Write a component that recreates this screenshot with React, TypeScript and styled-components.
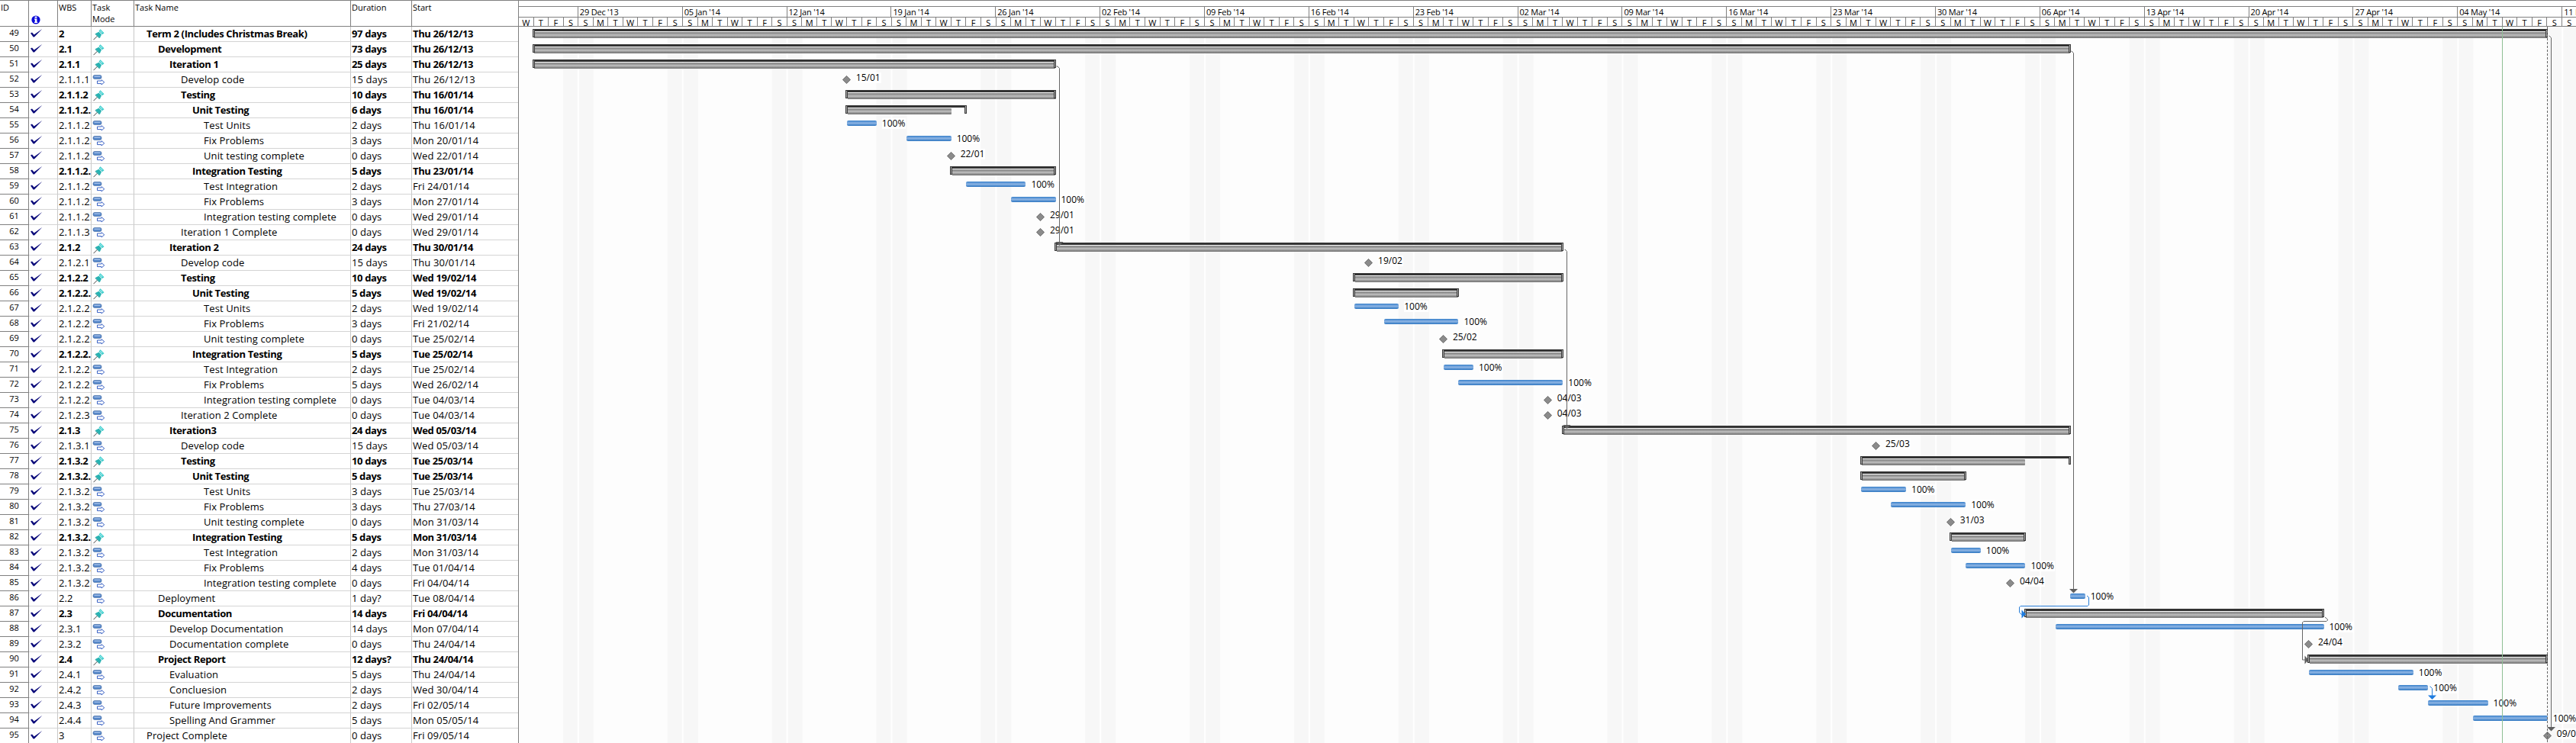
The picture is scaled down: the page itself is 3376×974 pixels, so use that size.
import styled, { createGlobalStyle } from "styled-components";

const GlobalStyle = createGlobalStyle`
    html, body {
        margin: 0;
        height: 974px;
        overflow: hidden;
        background: #fff;
    }
    body {
        font-family: "Open Sans", "Liberation Sans", sans-serif;
        font-size: 13px;
        color: #000;
    }
`;

const DAY = 19.553;
const WEEK = DAY * 7;
const X = (d: number) => -0.4 + DAY * d;

const Sheet = styled.div`
    display: flex;
    width: 3376px;
    height: 974px;
    overflow: hidden;
`;

const Table = styled.div`
    flex: 0 0 680px;
    box-sizing: border-box;
    border-right: 1px solid #808080;
`;

const columns = "38px 38px 44px 56px 284px 80px 1fr";

const TableHead = styled.div`
    display: grid;
    grid-template-columns: ${columns};
    height: 35px;
    box-sizing: border-box;
    border-top: 1px solid #808080;
    border-bottom: 1px solid #808080;
    font-size: 11px;
`;

const HeadCell = styled.div`
    box-sizing: border-box;
    padding: 1px 0 0 1px;
    line-height: 15px;
    border-right: 1px solid #808080;
    position: relative;
    &:last-child {
        border-right: 0;
    }
`;

const InfoBadge = styled.svg`
    position: absolute;
    left: 2px;
    top: 18px;
`;

const Row = styled.div<{ $bold?: boolean }>`
    display: grid;
    grid-template-columns: ${columns};
    height: 20px;
    box-sizing: border-box;
    font-weight: ${props => (props.$bold ? 700 : 400)};
    letter-spacing: ${props => (props.$bold ? -0.35 : 0.1)}px;
`;

const Cell = styled.div`
    box-sizing: border-box;
    height: 20px;
    padding-left: 1px;
    line-height: 19px;
    white-space: nowrap;
    overflow: hidden;
    border-right: 1px solid #c8c8c8;
    border-bottom: 1px solid #d4d4d4;
    &:last-child {
        border-right: 0;
    }
`;

const IdCell = styled(Cell)`
    padding: 0;
    text-align: center;
    font-size: 11px;
    line-height: 15px;
    font-weight: 400;
    letter-spacing: 0;
    border-right: 1px solid #808080;
    border-bottom: 1px solid #808080;
`;

const MarkCell = styled(Cell)`
    padding: 0;
`;

const NameCell = styled(Cell)<{ $level: number }>`
    padding-left: ${props => 16 + props.$level * 15}px;
`;

const Chart = styled.div`
    flex: 1;
    min-width: 0;
    overflow: hidden;
`;

const Timescale = styled.div`
    height: 35px;
    box-sizing: border-box;
    padding-top: 7px;
    border-top: 1px solid #808080;
    border-bottom: 1px solid #808080;
    font-size: 11px;
`;

const ScaleTier = styled.div`
    display: flex;
    height: 13px;
    border-top: 1px solid #808080;
    white-space: nowrap;
`;

const WeekCell = styled.div<{ $lead?: boolean }>`
    flex: 0 0 ${props => (props.$lead ? DAY * 4 - 0.4 : WEEK)}px;
    box-sizing: border-box;
    padding-left: 2px;
    border-right: 1px solid #808080;
    line-height: 13px;
    letter-spacing: -0.2px;
`;

const DayCell = styled.div`
    flex: 0 0 ${DAY}px;
    box-sizing: border-box;
    text-align: center;
    border-right: 1px solid #808080;
    line-height: 13px;
`;

const ChartBody = styled.div`
    position: relative;
    height: 940px;
    background-color: #fdfdfd;
    background-image: linear-gradient(
        to right,
        transparent 58.3px,
        #f7f7f7 58.3px,
        #f7f7f7 77.4px,
        #ffffff 77.4px,
        #ffffff 78.6px,
        #f7f7f7 78.6px,
        #f7f7f7 97.4px,
        transparent 97.4px
    );
    background-size: ${WEEK}px 100%;
    background-repeat: repeat-x;
`;

const Track = styled.div`
    display: flex;
    align-items: flex-start;
    height: 20px;
    white-space: nowrap;
`;

const Summary = styled.div`
    position: relative;
    flex: none;
    height: 12px;
    margin-top: 3px;
    border-top: 3px solid #333;
    box-sizing: border-box;
    &::before,
    &::after {
        content: "";
        position: absolute;
        top: -3px;
        width: 3px;
        height: 11px;
        box-sizing: border-box;
        border: 1px solid #3a3a3a;
        background: #a8a8a8;
    }
    &::before {
        left: 0;
    }
    &::after {
        right: 0;
    }
`;

const SummaryFill = styled.div`
    height: 8px;
    margin: 1px 0 0 2.5px;
    border-radius: 0 1px 1px 0;
    background: linear-gradient(to bottom, #8c8c8c 0%, #969696 28%, #c4c4c4 50%, #949494 72%, #747474 100%);
`;

const TaskBar = styled.div`
    flex: none;
    height: 7px;
    margin-top: 3px;
    border-radius: 2px;
    background: linear-gradient(to bottom, #2f7bc8 0%, #5f98d6 20%, #8ab2e2 50%, #5a94d2 75%, #2c74c0 100%);
`;

const Diamond = styled.svg`
    flex: none;
    margin-top: 3.5px;
`;

const BarLabel = styled.span`
    margin-left: 7px;
    padding-right: 1px;
    font-size: 12px;
    line-height: 14px;
    background: #fff;
`;

const Links = styled.svg`
    position: absolute;
    top: 0;
    left: 0;
    pointer-events: none;
`;

type Bar =
    | { k: "s"; from: number; to: number; fill?: number }
    | { k: "t"; from: number; to: number }
    | { k: "m"; at: number; label: string };

type Task = [number, string, "pin" | "auto", string, number, string, string, Bar];

const s = (from: number, to: number, fill?: number): Bar => ({ k: "s", from, to, fill });
const t = (from: number, to: number): Bar => ({ k: "t", from, to });
const m = (at: number, label: string): Bar => ({ k: "m", at, label });

const tasks: Task[] = [
    [49, "2", "pin", "Term 2 (Includes Christmas Break)", 0, "97 days", "Thu 26/12/13", s(1, 136)],
    [50, "2.1", "pin", "Development", 1, "73 days", "Thu 26/12/13", s(1, 104)],
    [51, "2.1.1", "pin", "Iteration 1", 2, "25 days", "Thu 26/12/13", s(1, 36)],
    [52, "2.1.1.1", "auto", "Develop code", 3, "15 days", "Thu 26/12/13", m(22, "15/01")],
    [53, "2.1.1.2", "pin", "Testing", 3, "10 days", "Thu 16/01/14", s(22, 36)],
    [54, "2.1.1.2.", "pin", "Unit Testing", 4, "6 days", "Thu 16/01/14", s(22, 30, 29)],
    [55, "2.1.1.2.", "auto", "Test Units", 5, "2 days", "Thu 16/01/14", t(22, 24)],
    [56, "2.1.1.2.", "auto", "Fix Problems", 5, "3 days", "Mon 20/01/14", t(26, 29)],
    [57, "2.1.1.2.", "auto", "Unit testing complete", 5, "0 days", "Wed 22/01/14", m(29, "22/01")],
    [58, "2.1.1.2.", "pin", "Integration Testing", 4, "5 days", "Thu 23/01/14", s(29, 36)],
    [59, "2.1.1.2.", "auto", "Test Integration", 5, "2 days", "Fri 24/01/14", t(30, 34)],
    [60, "2.1.1.2.", "auto", "Fix Problems", 5, "3 days", "Mon 27/01/14", t(33, 36)],
    [61, "2.1.1.2.", "auto", "Integration testing complete", 5, "0 days", "Wed 29/01/14", m(35, "29/01")],
    [62, "2.1.1.3", "auto", "Iteration 1 Complete", 3, "0 days", "Wed 29/01/14", m(35, "29/01")],
    [63, "2.1.2", "pin", "Iteration 2", 2, "24 days", "Thu 30/01/14", s(36, 70)],
    [64, "2.1.2.1", "auto", "Develop code", 3, "15 days", "Thu 30/01/14", m(57, "19/02")],
    [65, "2.1.2.2", "pin", "Testing", 3, "10 days", "Wed 19/02/14", s(56, 70)],
    [66, "2.1.2.2.", "pin", "Unit Testing", 4, "5 days", "Wed 19/02/14", s(56, 63)],
    [67, "2.1.2.2.", "auto", "Test Units", 5, "2 days", "Wed 19/02/14", t(56, 59)],
    [68, "2.1.2.2.", "auto", "Fix Problems", 5, "3 days", "Fri 21/02/14", t(58, 63)],
    [69, "2.1.2.2.", "auto", "Unit testing complete", 5, "0 days", "Tue 25/02/14", m(62, "25/02")],
    [70, "2.1.2.2.", "pin", "Integration Testing", 4, "5 days", "Tue 25/02/14", s(62, 70)],
    [71, "2.1.2.2.", "auto", "Test Integration", 5, "2 days", "Tue 25/02/14", t(62, 64)],
    [72, "2.1.2.2.", "auto", "Fix Problems", 5, "5 days", "Wed 26/02/14", t(63, 70)],
    [73, "2.1.2.2.", "auto", "Integration testing complete", 5, "0 days", "Tue 04/03/14", m(69, "04/03")],
    [74, "2.1.2.3", "auto", "Iteration 2 Complete", 3, "0 days", "Tue 04/03/14", m(69, "04/03")],
    [75, "2.1.3", "pin", "Iteration3", 2, "24 days", "Wed 05/03/14", s(70, 104)],
    [76, "2.1.3.1", "auto", "Develop code", 3, "15 days", "Wed 05/03/14", m(91, "25/03")],
    [77, "2.1.3.2", "pin", "Testing", 3, "10 days", "Tue 25/03/14", s(90, 104, 101)],
    [78, "2.1.3.2.", "pin", "Unit Testing", 4, "5 days", "Tue 25/03/14", s(90, 97)],
    [79, "2.1.3.2.", "auto", "Test Units", 5, "3 days", "Tue 25/03/14", t(90, 93)],
    [80, "2.1.3.2.", "auto", "Fix Problems", 5, "3 days", "Thu 27/03/14", t(92, 97)],
    [81, "2.1.3.2.", "auto", "Unit testing complete", 5, "0 days", "Mon 31/03/14", m(96, "31/03")],
    [82, "2.1.3.2.", "pin", "Integration Testing", 4, "5 days", "Mon 31/03/14", s(96, 101)],
    [83, "2.1.3.2.", "auto", "Test Integration", 5, "2 days", "Mon 31/03/14", t(96, 98)],
    [84, "2.1.3.2.", "auto", "Fix Problems", 5, "4 days", "Tue 01/04/14", t(97, 101)],
    [85, "2.1.3.2.", "auto", "Integration testing complete", 5, "0 days", "Fri 04/04/14", m(100, "04/04")],
    [86, "2.2", "auto", "Deployment", 1, "1 day?", "Tue 08/04/14", t(104, 105)],
    [87, "2.3", "pin", "Documentation", 1, "14 days", "Fri 04/04/14", s(101, 121)],
    [88, "2.3.1", "auto", "Develop Documentation", 2, "14 days", "Mon 07/04/14", t(103, 121)],
    [89, "2.3.2", "auto", "Documentation complete", 2, "0 days", "Thu 24/04/14", m(120, "24/04")],
    [90, "2.4", "pin", "Project Report", 1, "12 days?", "Thu 24/04/14", s(120, 136)],
    [91, "2.4.1", "auto", "Evaluation", 2, "5 days", "Thu 24/04/14", t(120, 127)],
    [92, "2.4.2", "auto", "Concluesion", 2, "2 days", "Wed 30/04/14", t(126, 128)],
    [93, "2.4.3", "auto", "Future Improvements", 2, "2 days", "Fri 02/05/14", t(128, 132)],
    [94, "2.4.4", "auto", "Spelling And Grammer", 2, "5 days", "Mon 05/05/14", t(131, 136)],
    [95, "3", "auto", "Project Complete", 0, "0 days", "Fri 09/05/14", m(136, "09/05")],
];

const weeks = [
    "29 Dec '13", "05 Jan '14", "12 Jan '14", "19 Jan '14", "26 Jan '14", "02 Feb '14", "09 Feb '14",
    "16 Feb '14", "23 Feb '14", "02 Mar '14", "09 Mar '14", "16 Mar '14", "23 Mar '14", "30 Mar '14",
    "06 Apr '14", "13 Apr '14", "20 Apr '14", "27 Apr '14", "04 May '14", "11 May '14",
];

const dayLetters = ["W", "T", "F", "S", "S", "M", "T"];

function CheckMark() {
    return <svg width="20" height="19" viewBox="0 0 20 19">
        <path d="M2 8.5 L4 7.6 L6.6 10.6 L17.2 3 L7 13.6 L5.6 13.6 Z" fill="#0a0a7a" />
    </svg>;
}

function PinIcon() {
    return <svg width="18" height="19" viewBox="-2 -2.7 18 19">
        <path d="M5.5 9.5 L0.5 14.5" stroke="#444" strokeWidth="1" />
        <path d="M3 6.2 L9 12 L11 7.5 L7.5 4 Z" fill="#27b3b3" />
        <path d="M7.5 3 L9.5 0.5 L14.5 5.5 L12 7.5 Z" fill="#3cc9c9" />
        <path d="M9.2 2.5 L12.2 5.5" stroke="#9af0f0" strokeWidth="1.2" />
        <path d="M3 6.2 L9 12 L8 12.4 L2.6 7 Z" fill="#118f8f" />
    </svg>;
}

function AutoIcon() {
    return <svg width="18" height="19" viewBox="0 0 18 19">
        <rect x="2" y="3.5" width="11" height="5" rx="2" fill="#5587c9" stroke="#41689f" strokeWidth="0.6" />
        <rect x="3.5" y="4.6" width="8" height="1.4" fill="#a4bfe8" />
        <path d="M7.5 11 H13 V9.7 L16.8 12.8 L13 16 V14.6 H7.5 Z" fill="#fff" stroke="#3a62c4" strokeWidth="1" />
    </svg>;
}

function BarCell({ bar }: { bar: Bar }) {
    if (bar.k === "s") {
        const left = X(bar.from) - 1.5;
        const right = X(bar.to) + 0.5;
        const fillEnd = X(bar.fill ?? bar.to);
        return <Track style={{ paddingLeft: left }}>
            <Summary style={{ width: right - left }}>
                <SummaryFill style={{ width: fillEnd - left - 2.5 }} />
            </Summary>
        </Track>;
    }
    if (bar.k === "t") {
        return <Track style={{ paddingLeft: X(bar.from) }}>
            <TaskBar style={{ width: X(bar.to) - X(bar.from) }} />
            <BarLabel>100%</BarLabel>
        </Track>;
    }
    return <Track style={{ paddingLeft: X(bar.at) - 6 }}>
        <Diamond width="11" height="11" viewBox="0 0 11 11">
            <path d="M5.5 0.4 L10.6 5.5 L5.5 10.6 L0.4 5.5 Z" fill="#8b8b8b" stroke="#5a5a5a" strokeWidth="0.8" />
        </Diamond>
        <BarLabel>{bar.label}</BarLabel>
    </Track>;
}

function App() {
    const days = Array.from({ length: 138 }, (_, i) => dayLetters[i % 7]);
    return <Sheet>
        <GlobalStyle />
        <Table>
            <TableHead>
                <HeadCell>ID</HeadCell>
                <HeadCell>
                    <InfoBadge width="14" height="14" viewBox="0 0 14 14">
                        <circle cx="7" cy="7" r="5.6" fill="#0a0ad8" />
                        <rect x="5.6" y="2.6" width="2.8" height="2" fill="#fff" />
                        <path d="M5 5.6 H8.4 V9.8 H9.2 V11 H5 V9.8 H5.8 V6.8 H5 Z" fill="#fff" />
                    </InfoBadge>
                </HeadCell>
                <HeadCell>WBS</HeadCell>
                <HeadCell>Task<br />Mode</HeadCell>
                <HeadCell>Task Name</HeadCell>
                <HeadCell>Duration</HeadCell>
                <HeadCell>Start</HeadCell>
            </TableHead>
            {tasks.map(([id, wbs, mode, name, level, duration, start, bar]) =>
                <Row key={id} $bold={bar.k === "s"}>
                    <IdCell>{id}</IdCell>
                    <MarkCell><CheckMark /></MarkCell>
                    <Cell>{wbs}</Cell>
                    <MarkCell>{mode === "pin" ? <PinIcon /> : <AutoIcon />}</MarkCell>
                    <NameCell $level={level}>{name}</NameCell>
                    <Cell>{duration}</Cell>
                    <Cell>{start}</Cell>
                </Row>)}
        </Table>
        <Chart>
            <Timescale>
                <ScaleTier>
                    <WeekCell $lead />
                    {weeks.map(week => <WeekCell key={week}>{week}</WeekCell>)}
                </ScaleTier>
                <ScaleTier>
                    {days.map((day, i) => <DayCell key={i}>{day}</DayCell>)}
                </ScaleTier>
            </Timescale>
            <ChartBody>
                {tasks.map(([id, , , , , , , bar]) => <BarCell key={id} bar={bar} />)}
                {/* page coordinates: the viewBox starts where the chart body starts */}
                <Links width="2696" height="940" viewBox="680 35 2696 940">
                    <path d="M3279.5 35 V975" stroke="#8fbf95" fill="none" />
                    <path d="M3338.5 35 V975" stroke="#666" strokeDasharray="3 2" fill="none" />
                    <g stroke="#666" fill="none">
                        <path d="M1384.5 87 H1386 L1388.5 89.5 V318" />
                        <path d="M2050.5 327 H2051 L2053.5 329.5 V558" />
                        <path d="M2714.5 67 H2715 L2717.5 69.5 V773" />
                        <path d="M3340.5 47 H3341 L3343.5 49.5 V954" />
                        <path d="M3047 809 L3050.5 812 V813 L3049 814.5 H3019 L3017.5 816 V865 H3021" />
                    </g>
                    <g fill="#5f5f5f">
                        <path d="M1383.5 317 H1393.5 L1388.5 322 Z" />
                        <path d="M2048.5 557 H2058.5 L2053.5 562 Z" />
                        <path d="M2712 772 H2723 L2717.5 777.5 Z" />
                        <path d="M3338 953 H3349 L3343.5 958.5 Z" />
                        <path d="M3020.5 859.5 L3025.5 865 L3020.5 870.5 Z" />
                    </g>
                    <g stroke="#2a7fd8" fill="none">
                        <path d="M2735 781 L2737.5 783 V793 L2736 794.5 H2648 L2646.5 796 V803 L2650 806" />
                        <path d="M3184.5 900 H3185 L3187.5 902.5 V912" />
                    </g>
                    <g fill="#1f7de0">
                        <path d="M2649.5 799.5 L2655 805 L2649.5 810.5 Z" />
                        <path d="M3182 911.5 H3193 L3187.5 917 Z" />
                    </g>
                </Links>
            </ChartBody>
        </Chart>
    </Sheet>;
}

export default App;
